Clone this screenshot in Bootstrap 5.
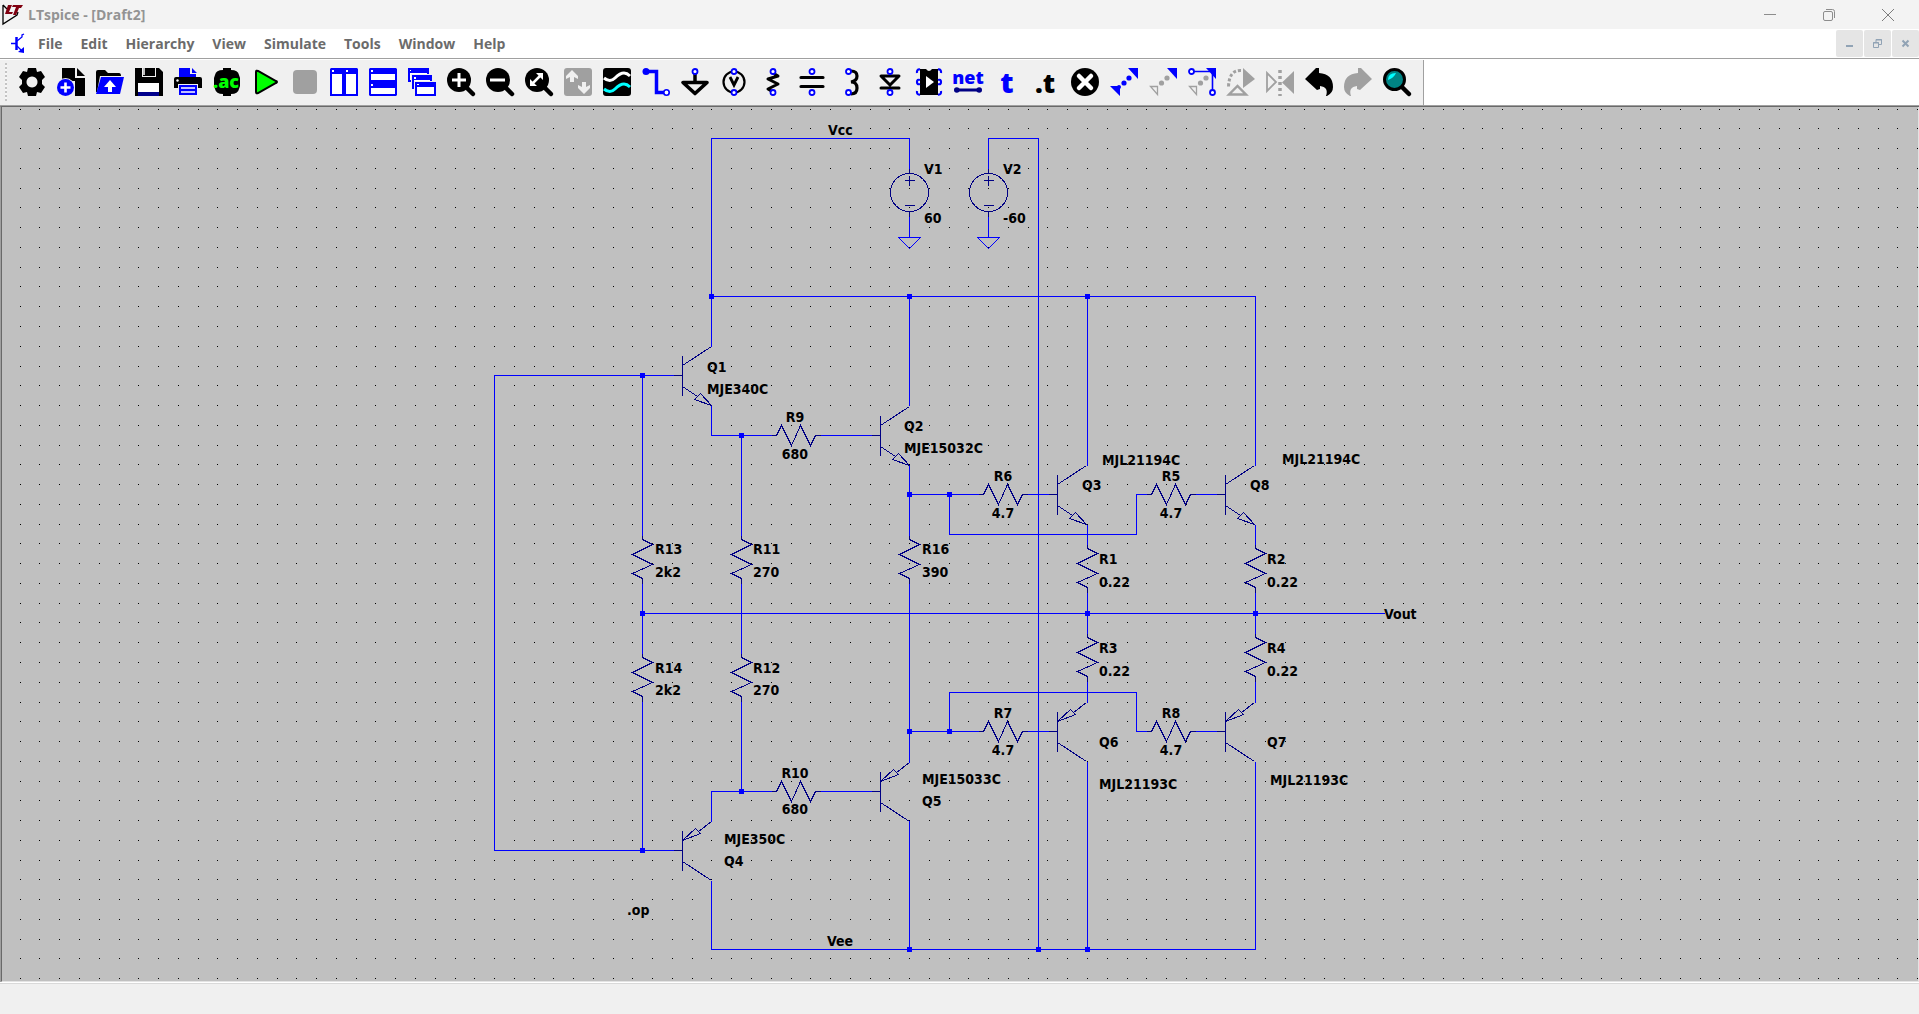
<!DOCTYPE html>
<html lang="en">
<head>
<meta charset="utf-8">
<meta name="viewport" content="width=device-width, initial-scale=1">
<title>LTspice - [Draft2]</title>
<link href="https://cdn.jsdelivr.net/npm/bootstrap@5.3.0/dist/css/bootstrap.min.css" rel="stylesheet">
<style>
  body { font-family: "Open Sans", "Noto Sans", sans-serif; font-size: 14px; line-height: 20px; background: #f0f0f0; color: #6b6b6b; }
  button { border: 0; padding: 0; background: transparent; display: flex; align-items: center; justify-content: center; flex: none; }
  svg { display: block; flex: none; }
  .titlebar { height: 29px; background: #f3f3f3; color: #939393; }
  .titlebar h1 { font-size: 14px; line-height: 20px; font-weight: 700; }
  .caption-group { padding-right: 2px; }
  .caption-btn { width: 59px; height: 28px; }
  .menubar { height: 29px; background: #fff; }
  .menubar a { color: #6b6b6b; font-weight: 700; text-decoration: none; padding: 0 9px; }
  .mdi-group { gap: 1px; }
  .mdi-btn { width: 27px; height: 27px; background: #e5e5e5; border-radius: 2px; }
  .toolrow { height: 48px; background: #fff; border-top: 1px solid #a0a0a0; border-bottom: 1px solid #a0a0a0; padding-top: 1px; }
  .tools { background: #f0f0f0; border-right: 1px solid #a0a0a0; gap: 11px; padding: 0 12px 1px 5px; }
  .tools svg { overflow: visible; }
  .grip { width: 2px; height: 38px; background: repeating-linear-gradient(#c4c4c4 0 2px, #f7f7f7 2px 4px); }
  .tools button { width: 28px; height: 28px; }
  .canvas-area { background: #c0c0c0; border-top: 1px solid #696969; border-left: 1px solid #a0a0a0; min-height: 0; }
  .canvas-frame { border-left: 1px solid #696969; border-right: 1px solid #e3e3e3; border-bottom: 1px solid #e3e3e3; min-height: 0; }
  .statusbar { height: 32px; background: #f0f0f0; border-top: 1px solid #fff; }
  .statusbar div { border-top: 1px solid #d9d9d9; }
  .wires { stroke: #00f; fill: none; shape-rendering: crispEdges; }
  .parts { stroke: #000084; fill: none; shape-rendering: crispEdges; }
  .nodes { fill: #00f; shape-rendering: crispEdges; }
  .labels { font: bold 14px "DejaVu Sans Condensed", "DejaVu Sans", sans-serif; fill: #000; }
  .mid { text-anchor: middle; }
  .icon-text { font-family: "Open Sans", sans-serif; font-weight: 800; text-anchor: middle; }
</style>
<script src="https://cdn.jsdelivr.net/npm/bootstrap@5.3.0/dist/js/bootstrap.bundle.min.js"></script>
</head>
<body class="vh-100 d-flex flex-column overflow-hidden">

<header class="titlebar d-flex align-items-center flex-shrink-0">
  <svg width="24" height="22" viewBox="-2 0 24 22"><path d="M1 1v19L15 11l1-3M1 1l4 4" fill="none" stroke="#000" stroke-width="1.3"/><path d="M6 1h4L7 8h4l-1 2H3zM11 1h10l-2 3h-2l-3 7h-3l3-8h-4z" fill="#800010"/></svg>
  <h1 class="m-0 ps-1">LTspice - [Draft2]</h1>
  <div class="caption-group ms-auto d-flex">
    <button class="caption-btn" aria-label="Minimize"><svg width="12" height="12"><path d="M0 5.500h12" stroke="#8c8c8c"/></svg></button>
    <button class="caption-btn" aria-label="Restore"><svg width="12" height="12" fill="none" stroke="#8c8c8c"><rect x=".5" y="2.500" width="9" height="9" rx="1.500"/><path d="M3 .5h6.500a2 2 0 0 1 2 2V9"/></svg></button>
    <button class="caption-btn" aria-label="Close"><svg width="12" height="12"><path d="M0 0l12 12M12 0L0 12" stroke="#7c7c7c"/></svg></button>
  </div>
</header>

<nav class="menubar d-flex align-items-center flex-shrink-0">
  <svg class="ms-2 me-1" width="17" height="22" viewBox="-1 0 17 22" fill="none" stroke="#00f"><path d="M2 10.500h5M15 1l-2 1v2l-5 4M8 13l5 5" stroke-width="1.300"/><path d="M7.500 4v13" stroke-width="2.500"/><path d="M15 20v-6l-6 5z" fill="#00f" stroke="none"/></svg>
  <a href="#">File</a><a href="#">Edit</a><a href="#">Hierarchy</a><a href="#">View</a><a href="#">Simulate</a><a href="#">Tools</a><a href="#">Window</a><a href="#">Help</a>
  <div class="mdi-group ms-auto d-flex">
    <button class="mdi-btn" aria-label="Minimize document"><svg width="9" height="9"><path d="M1 7h7" stroke="#91a3b5" stroke-width="2"/></svg></button>
    <button class="mdi-btn" aria-label="Restore document"><svg width="9" height="9" fill="none" stroke="#91a3b5"><path d="M.5 3.500h5v5h-5zM0 4h6M3 3V.5h5.500v5H6M3 1h6"/></svg></button>
    <button class="mdi-btn" aria-label="Close document"><svg width="9" height="9"><path d="M1.500 1.500l6 6M7.500 1.500l-6 6" stroke="#91a3b5" stroke-width="2"/></svg></button>
  </div>
</nav>

<div class="toolrow d-flex flex-shrink-0">
  <div class="tools d-flex align-items-center" role="toolbar" aria-label="Schematic tools">
    <span class="grip"></span>
    <button aria-label="Settings"><svg width="28" height="28"><path fill-rule="evenodd" d="M10 0h8l1 4 4-1 4 6-3 3v4l3 3-4 6-4-1-1 4h-8l-1-4-4 1-4-6 3-3v-4L1 9l4-6 4 1zM14 8.500a5.500 5.500 0 1 0 .01 0z"/></svg></button>
    <button aria-label="New schematic"><svg width="28" height="28"><path d="M5 0h13v10h10v18H18V13H5zM20 0l8 8h-8z"/><circle cx="8.500" cy="19.500" r="9.500" fill="#f0f0f0"/><circle cx="8.500" cy="19.500" r="8.500" fill="#00f"/><path d="M8.500 14.500v10M3.500 19.500h10" stroke="#fff" stroke-width="2.600"/></svg></button>
    <button aria-label="Open"><svg width="28" height="28"><path d="M0 24V4q0-2 2-2h7l3 3h11q2 0 2 3H4L1 24z"/><path d="M5 9h23l-4 17H0z" fill="#00f"/><path d="M14 12l6 7h-4v5h-4v-5H8z" fill="#fff"/></svg></button>
    <button aria-label="Save"><svg width="28" height="28"><path d="M0 0h24l4 4v24H0z"/><path d="M7 0h14v9H7z" fill="#f0f0f0"/><path d="M11 0h9v8h-9z"/><path d="M8 0h3v8H8z"/><path d="M8 0h2v7H8z" fill="#c0c0c0"/><path d="M3 15h21v9H3z" fill="#fff"/><path d="M3 24h21v4H3z" fill="#00008c"/></svg></button>
    <button aria-label="Print"><svg width="28" height="28"><path d="M5 0h11v6h6v5H5zM18 0l5 5h-5z" fill="#00f"/><path d="M0 11q0-2 2-2h24q2 0 2 2v9H0z"/><circle cx="3.500" cy="12.500" r="1.200" fill="#fff"/><path d="M4 16h20v12H4z" fill="#f0f0f0"/><path d="M5 17h18v10H5z" fill="#00f"/><path d="M7 20h14M7 24h14" stroke="#fff" stroke-width="1.500"/></svg></button>
    <button aria-label="AC analysis"><svg width="28" height="28"><path d="M10 0h8v2q7 0 8 5l1 3v8l-1 3q-1 5-8 5v2h-8v-2q-7 0-8-5l-1-3v-8l1-3q1-5 8-5z"/><text class="icon-text" x="13" y="20" font-size="18" fill="#0f0">.ac</text></svg></button>
    <button aria-label="Run"><svg width="28" height="28"><path d="M4 4v20q0 2 2 1l18-10q2-1 0-2L6 3Q4 2 4 4z" fill="#0f0" stroke="#000" stroke-width="2"/></svg></button>
    <button aria-label="Stop" disabled><svg width="28" height="28"><rect x="2" y="2" width="24" height="24" rx="4" fill="#a0a0a0"/></svg></button>
    <button aria-label="Tile vertically"><svg width="28" height="28"><path d="M1 0h26l1 1v27H0V1z" fill="#00f"/><path d="M2 6h10v20H2zM16 6h10v20H16z" fill="#fff"/><path d="M2 2h2v2H2zM16 2h2v2h-2z" fill="#fff"/></svg></button>
    <button aria-label="Tile horizontally"><svg width="28" height="28"><path d="M1 0h26l1 1v26l-1 1H1l-1-1V1z" fill="#00f"/><path d="M2 6h24v6H2zM2 20h24v6H2z" fill="#fff"/><path d="M2 2h2v2H2zM2 16h2v2H2z" fill="#fff"/></svg></button>
    <button aria-label="Cascade"><svg width="28" height="28"><path d="M0 0h21v14H0z" fill="#00f"/><path d="M2 5h17v7H2zM2 2h1v1H2z" fill="#fff"/><path d="M3 6h21v15H3z" fill="#f0f0f0"/><path d="M4 7h20v14H4z" fill="#00f"/><path d="M6 12h16v7H6zM6 9h2v2H6z" fill="#fff"/><path d="M6 13h22v15H6z" fill="#f0f0f0"/><path d="M7 14h21v14H7z" fill="#00f"/><path d="M9 19h17v7H9zM9 16h2v1H9z" fill="#fff"/></svg></button>
    <button aria-label="Zoom in"><svg width="28" height="28"><circle cx="12" cy="12" r="12"/><path d="M19 19l7 7" stroke="#000" stroke-width="4.500" stroke-linecap="round"/><path d="M12 5v14M5 12h14" stroke="#fff" stroke-width="3"/></svg></button>
    <button aria-label="Zoom out"><svg width="28" height="28"><circle cx="12" cy="12" r="12"/><path d="M19 19l7 7" stroke="#000" stroke-width="4.500" stroke-linecap="round"/><path d="M4 12h15" stroke="#fff" stroke-width="3"/></svg></button>
    <button aria-label="Zoom to fit"><svg width="28" height="28"><circle cx="12" cy="12" r="12"/><path d="M19 19l7 7" stroke="#000" stroke-width="4.500" stroke-linecap="round"/><path d="M11 5h7v7zM5 11v7h7z" fill="#fff"/><path d="M7 16l9-9" stroke="#fff" stroke-width="2.500"/></svg></button>
    <button aria-label="Autorange" disabled><svg width="28" height="28"><rect width="28" height="28" rx="3" fill="#a0a0a0"/><path d="M8 2l6 6v3l-4-2v5H6V9l-4 2V8zM20 26l6-6v-3l-4 2v-5h-4v5l-4-2v3z" fill="#f0f0f0"/></svg></button>
    <button aria-label="Waveform viewer"><svg width="28" height="28" fill="none" stroke-width="3"><rect width="28" height="28" rx="3" fill="#000"/><path d="M1 10q6 5 11 0t9-5q3 0 6 3" stroke="#fff"/><path d="M1 21q6 5 11 0t9-5q3 0 6 3" stroke="#0ff"/></svg></button>
    <button aria-label="Wire"><svg width="28" height="28" fill="none" stroke="#00f"><path d="M4 3.500h10.500V24.500H22" stroke-width="3.500"/><circle cx="4" cy="3.500" r="3.500" fill="#00f" stroke="none"/><circle cx="24.500" cy="24.500" r="2.700" fill="#fff" stroke-width="1.600"/></svg></button>
    <button aria-label="Ground"><svg width="28" height="28" fill="none" stroke="#000"><path d="M14 6v7" stroke-width="3.500"/><path d="M2 14.500h24L14 25.500z" stroke-width="3.600" stroke-linejoin="round"/><circle cx="14" cy="3.500" r="2.500" stroke="#00f" stroke-width="1.800" fill="#fff"/></svg></button>
    <button aria-label="Voltage source"><svg width="28" height="28" fill="none"><circle cx="14" cy="14" r="10.500" stroke="#000" stroke-width="2.200"/><path d="M10 9l4 8 4-8" stroke="#000" stroke-width="2.800"/><g fill="#fff" stroke="#00f" stroke-width="1.800"><circle cx="14" cy="3.500" r="2.500"/><circle cx="14" cy="24.500" r="2.500"/></g></svg></button>
    <button aria-label="Resistor"><svg width="28" height="28" fill="none"><path d="M14 5l5 3-10 3 10 5-10 5 5 3" stroke="#000" stroke-width="3" stroke-linejoin="round"/><g fill="#fff" stroke="#00f" stroke-width="1.800"><circle cx="14" cy="3.500" r="2.500"/><circle cx="14" cy="24.500" r="2.500"/></g></svg></button>
    <button aria-label="Capacitor"><svg width="28" height="28" fill="none"><path d="M3 9.500h22M3 18.500h22" stroke="#000" stroke-width="3.200" stroke-linecap="round"/><g fill="#fff" stroke="#00f" stroke-width="1.800"><circle cx="14" cy="3.500" r="2.500"/><circle cx="14" cy="24.500" r="2.500"/></g></svg></button>
    <button aria-label="Inductor"><svg width="28" height="28" fill="none"><path d="M14 3q6 0 6 5t-6 6q6 0 6 6t-6 6" stroke="#000" stroke-width="3.200"/><g fill="#fff" stroke="#00f" stroke-width="1.800"><circle cx="11.500" cy="3.500" r="2.500"/><circle cx="11.500" cy="24.500" r="2.500"/></g></svg></button>
    <button aria-label="Diode"><svg width="28" height="28" fill="none"><path d="M5 8h18l-9 9zM5 20h18" stroke="#000" stroke-width="3" stroke-linecap="round" stroke-linejoin="round"/><g fill="#fff" stroke="#00f" stroke-width="1.800"><circle cx="14" cy="3.500" r="2.500"/><circle cx="14" cy="24.500" r="2.500"/></g></svg></button>
    <button aria-label="Component"><svg width="28" height="28"><path d="M5 1h6q3 4 6 0h6v26H5z"/><path d="M11 8l8 6-8 6z" fill="#fff"/><g fill="none" stroke="#00f" stroke-width="2.200"><path d="M5 1.500Q1.500 1 2 5M5 12Q2 11 2 14t3 2M5 26.500Q1.500 27 2 23M23 1.500q3.500-.5 3 3.500M23 12q3-1 3 2t-3 2M23 26.500q3.500.5 3-3.500"/></g></svg></button>
    <button aria-label="Net name"><svg width="28" height="28"><text class="icon-text" x="14" y="16" font-size="18" fill="#00f">net</text><path d="M3 22h22" stroke="#000084" stroke-width="3"/><circle cx="2.800" cy="22" r="2.800" fill="#000084"/><circle cx="25.200" cy="22" r="2.800" fill="#000084"/></svg></button>
    <button aria-label="Text"><svg width="28" height="28"><text class="icon-text" x="14" y="25" font-size="29" fill="#00f">t</text></svg></button>
    <button aria-label="SPICE directive"><svg width="28" height="28"><text class="icon-text" x="13" y="25" font-size="27">.t</text></svg></button>
    <button aria-label="Delete"><svg width="28" height="28"><circle cx="14" cy="14" r="14"/><path d="M8 8l12 12M20 8L8 20" stroke="#fff" stroke-width="4.500" stroke-linecap="round"/></svg></button>
    <button aria-label="Move"><svg width="28" height="28" fill="#00f"><path d="M18 0h10v11zM0 18h10v10z"/><circle cx="19" cy="10" r="2.600"/><circle cx="14" cy="15" r="2.600"/><circle cx="9" cy="19" r="2"/></svg></button>
    <button aria-label="Duplicate"><svg width="28" height="28" fill="#a0a0a0"><path d="M18 0h10v11z" fill="#00f"/><path d="M1.500 18.500h7v8z" fill="none" stroke="#a0a0a0" stroke-width="1.300"/><circle cx="18" cy="10" r="2.600"/><circle cx="12.500" cy="15" r="2.600"/></svg></button>
    <button aria-label="Drag"><svg width="28" height="28" fill="#a0a0a0"><path d="M18 0h10v11z" fill="#00f"/><path d="M1.500 18.500h7v8z" fill="none" stroke="#a0a0a0" stroke-width="1.300"/><circle cx="18" cy="10" r="2.600"/><circle cx="12.500" cy="15" r="2.600"/><path d="M6 3.500h18.500V22" fill="none" stroke="#00f" stroke-width="1.600"/><g fill="#fff" stroke="#00f" stroke-width="1.800"><circle cx="3.500" cy="3.500" r="2.500"/><circle cx="24.500" cy="24.500" r="2.500"/></g></svg></button>
    <button aria-label="Rotate" disabled><svg width="28" height="28" fill="none" stroke="#a0a0a0"><path d="M16 0l12 11-12 9z" fill="#a0a0a0" stroke="none"/><path d="M14 2.500Q2 2 1.500 19" stroke-width="3" stroke-dasharray="3 2"/><path d="M2 26.500h17l-8.500-8.500z" stroke-width="2.400"/></svg></button>
    <button aria-label="Mirror" disabled><svg width="28" height="28" fill="none" stroke="#a0a0a0"><path d="M1 5v18l9-9z" stroke-width="1.800"/><path d="M28 3v23L16 14.500z" fill="#a0a0a0" stroke="none"/><path d="M14 2v26" stroke-width="3.500" stroke-dasharray="3 3"/></svg></button>
    <button aria-label="Undo"><svg width="28" height="28"><path d="M0 11L11 0h3v5q14 1 14 14 0 6-6 9h-1q3-9-6-10v3l-3 1z"/></svg></button>
    <button aria-label="Redo" disabled><svg width="28" height="28"><path d="M28 11L17 0h-3v5Q0 6 0 19q0 6 6 9h1q-3-9 6-10v3l3 1z" fill="#a0a0a0"/></svg></button>
    <button aria-label="Find"><svg width="28" height="28"><path d="M19 19l7 7" stroke="#000" stroke-width="4.500" stroke-linecap="round"/><circle cx="11.500" cy="11.500" r="10" fill="#008484" stroke="#000" stroke-width="3"/><path d="M5 12Q5 5 13 5q-2 5-8 7z" fill="#0ff"/></svg></button>
  </div>
</div>

<main class="canvas-area flex-fill d-flex">
  <div class="canvas-frame flex-fill d-flex overflow-hidden">
  <svg id="schematic" class="w-100 h-100" role="img" aria-label="Amplifier output stage schematic">
    <defs>
      <path id="res-v" d="M0-4V0L10 5-10 15 10 25-10 34 0 39V44"/>
      <path id="res-h" d="M-5 0H0L5-10 15 10 24-10 34 10 39 0H44"/>
      <path id="npn" d="M-9 0H0M0-20V20M0-10L29-29M0 11L15 21M18 18L12 24 29 30z"/>
      <path id="pnp" d="M-9 0H0M0-20V20M0 11L29 30M0-10L13-22 18-17zM16-19L29-29"/>
      <g id="vsrc"><circle cx="0" cy="0" r="19"/><path d="M0-24V-19M0 19V24M-5-12H5M0-17V-7M-5 13H5"/></g>
      <path id="gnd" d="M-11 0H11L0 11z"/>
    </defs>
    <g transform="translate(-2 -107)">
      <g id="grid" fill="#000" shape-rendering="crispEdges"></g>
      <g transform="translate(.5 .5)">
        <g class="wires">
          <path d="M711 346V138H909V168M988 168V138H1038V949M909 216V237M988 216V237M711 296H1255V465M909 296V405M1087 296V465"/>
          <path d="M673 375H494V850H673M642 375V535M642 583V653M642 701V850"/>
          <path d="M711 405V435H771M820 435H871M741 435V535M741 583V653M741 701V791"/>
          <path d="M909 465V535M909 583V762M909 494H978M1027 494H1048M949 494V534H1136V494H1146M1195 494H1216"/>
          <path d="M1087 524V544M1087 592V633M1087 681V702M1255 524V544M1255 592V633M1255 681V702M642 613H1384"/>
          <path d="M909 731H978M1027 731H1048M949 731V692H1136V731H1146M1195 731H1216"/>
          <path d="M711 821V791H771M820 791H871M711 880V949H1255V761M909 820V949M1087 761V949"/>
          <use href="#gnd" x="909" y="237"/><use href="#gnd" x="988" y="237"/>
        </g>
        <g class="parts">
          <use href="#vsrc" x="909" y="192"/><use href="#vsrc" x="988" y="192"/>
          <use href="#npn" x="682" y="375"/><use href="#npn" x="880" y="435"/><use href="#npn" x="1057" y="494"/><use href="#npn" x="1225" y="494"/>
          <use href="#pnp" x="682" y="850"/><use href="#pnp" x="880" y="791"/><use href="#pnp" x="1057" y="731"/><use href="#pnp" x="1225" y="731"/>
          <use href="#res-h" x="776" y="435"/><use href="#res-h" x="776" y="791"/><use href="#res-h" x="983" y="494"/><use href="#res-h" x="983" y="731"/><use href="#res-h" x="1151" y="494"/><use href="#res-h" x="1151" y="731"/>
          <use href="#res-v" x="642" y="539"/><use href="#res-v" x="741" y="539"/><use href="#res-v" x="909" y="539"/><use href="#res-v" x="642" y="657"/><use href="#res-v" x="741" y="657"/>
          <use href="#res-v" x="1087" y="548"/><use href="#res-v" x="1255" y="548"/><use href="#res-v" x="1087" y="637"/><use href="#res-v" x="1255" y="637"/>
        </g>
      </g>
      <path class="nodes" d="M709 294h5v5h-5zM907 294h5v5h-5zM1085 294h5v5h-5zM640 373h5v5h-5zM739 433h5v5h-5zM907 492h5v5h-5zM947 492h5v5h-5zM640 611h5v5h-5zM1085 611h5v5h-5zM1253 611h5v5h-5zM907 729h5v5h-5zM947 729h5v5h-5zM739 789h5v5h-5zM640 848h5v5h-5zM907 947h5v5h-5zM1036 947h5v5h-5zM1085 947h5v5h-5z"/>
      <g class="labels">
        <text x="828" y="135">Vcc</text><text x="924" y="174">V1</text><text x="924" y="223">60</text><text x="1003" y="174">V2</text><text x="1003" y="223">-60</text>
        <text x="707" y="372">Q1</text><text x="707" y="394">MJE340C</text><text x="904" y="431">Q2</text><text x="904" y="453">MJE15032C</text>
        <text x="1102" y="465">MJL21194C</text><text x="1082" y="490">Q3</text><text x="1282" y="464">MJL21194C</text><text x="1250" y="490">Q8</text>
        <text x="655" y="554">R13</text><text x="655" y="577">2k2</text><text x="753" y="554">R11</text><text x="753" y="577">270</text><text x="922" y="554">R16</text><text x="922" y="577">390</text>
        <text x="655" y="673">R14</text><text x="655" y="695">2k2</text><text x="753" y="673">R12</text><text x="753" y="695">270</text>
        <text x="1099" y="564">R1</text><text x="1099" y="587">0.22</text><text x="1267" y="564">R2</text><text x="1267" y="587">0.22</text>
        <text x="1099" y="653">R3</text><text x="1099" y="676">0.22</text><text x="1267" y="653">R4</text><text x="1267" y="676">0.22</text>
        <text x="1384" y="619">Vout</text><text x="1099" y="747">Q6</text><text x="1267" y="747">Q7</text><text x="1099" y="789">MJL21193C</text><text x="1270" y="785">MJL21193C</text>
        <text x="922" y="784">MJE15033C</text><text x="922" y="806">Q5</text><text x="724" y="844">MJE350C</text><text x="724" y="866">Q4</text>
        <text x="627" y="915">.op</text><text x="827" y="946">Vee</text>
        <g class="mid">
          <text x="795" y="422">R9</text><text x="795" y="459">680</text><text x="795" y="778">R10</text><text x="795" y="814">680</text>
          <text x="1003" y="481">R6</text><text x="1003" y="518">4.7</text><text x="1171" y="481">R5</text><text x="1171" y="518">4.7</text>
          <text x="1003" y="718">R7</text><text x="1003" y="755">4.7</text><text x="1171" y="718">R8</text><text x="1171" y="755">4.7</text>
        </g>
      </g>
    </g>
  </svg>
  </div>
</main>
<footer class="statusbar flex-shrink-0"><div></div></footer>

<script>
  // Snap grid: one dot every 32 drawing units at the current zoom.
  const PITCH = 19.765, ORIGIN_X = 19.7, ORIGIN_Y = 108.6;
  function drawGrid() {
    const box = document.getElementById('schematic').getBoundingClientRect();
    let dots = '';
    for (let j = 0; ; j++) {
      const y = Math.round(ORIGIN_Y + j * PITCH);
      if (y > box.bottom) break;
      for (let i = 0; ; i++) {
        const x = Math.round(ORIGIN_X + i * PITCH);
        if (x > box.right) break;
        dots += `M${x} ${y}h1v1h-1z`;
      }
    }
    document.getElementById('grid').innerHTML = `<path d="${dots}"/>`;
  }
  drawGrid();
  window.addEventListener('resize', drawGrid);
</script>
</body>
</html>
